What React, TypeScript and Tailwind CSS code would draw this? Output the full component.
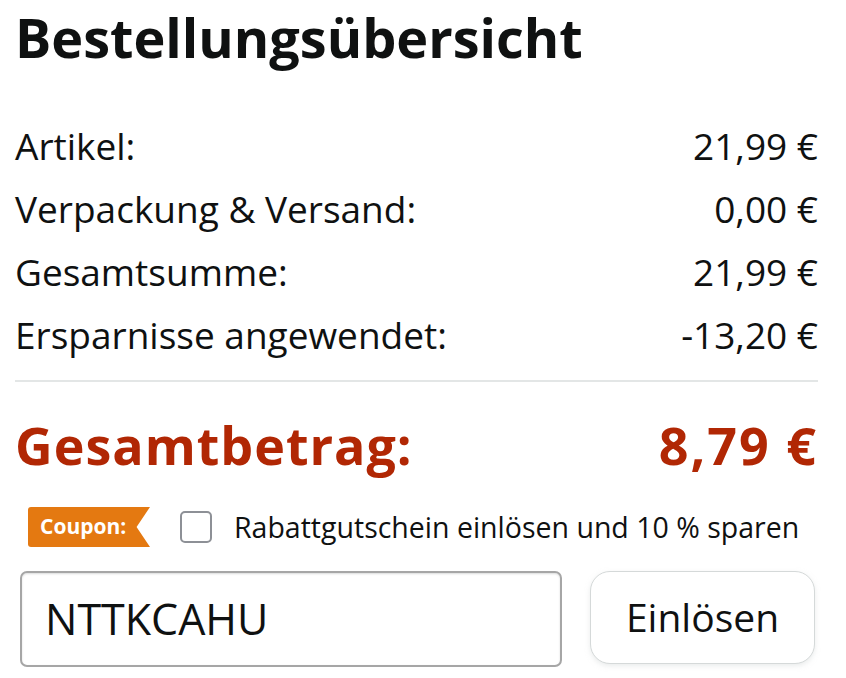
const rows = [
  { label: "Artikel:", value: "21,99 €" },
  { label: "Verpackung & Versand:", value: "0,00 €" },
  { label: "Gesamtsumme:", value: "21,99 €" },
  { label: "Ersparnisse angewendet:", value: "-13,20 €" },
];

export default function App() {
  return (
    <div className="min-h-[678px] bg-white font-['Open_Sans',sans-serif] text-[#0f1111]">
      <div className="w-[818px] pl-[15px]">
        <h1 className="text-[54px] font-bold leading-[74px]">
          Bestellungsübersicht
        </h1>

        <div className="mt-[40px]">
          {rows.map((row) => (
            <div
              key={row.label}
              className="flex h-[63px] items-center justify-between text-[37px]"
            >
              <span>{row.label}</span>
              <span>{row.value}</span>
            </div>
          ))}
        </div>

        <div className="mt-[14px] h-[2px] bg-[#e3e6e6]" />

        <div className="mt-[36px] flex h-[54px] items-center justify-between text-[52px] font-bold leading-[72px] tracking-[1px] text-[#b12704]">
          <span>Gesamtbetrag:</span>
          <span className="tracking-[2px]">8,79 €</span>
        </div>

        <div className="mt-[35px] flex h-[40px] items-center pl-[13px]">
          <div className="flex h-[40px] w-[122px] items-center rounded-l-[3px] bg-[#e47911] pl-[12px] text-[21px] font-bold text-white [clip-path:polygon(0_0,100%_0,89%_50%,100%_100%,0_100%)]">
            Coupon:
          </div>
          <div className="ml-[30px] h-[32px] w-[32px] rounded-[5px] border-2 border-[#8d9096] bg-white" />
          <span className="ml-[22px] text-[28.5px] leading-none">
            Rabattgutschein einlösen und 10 % sparen
          </span>
        </div>

        <div className="mt-[24px] flex items-start pl-[5px]">
          <div className="flex h-[96px] w-[542px] items-center rounded-[7px] border-2 border-[#a6a6a6] pl-[23px] text-[43px] text-[#0f1111] shadow-[inset_0_1px_2px_rgba(15,17,17,0.15)]">
            NTTKCAHU
          </div>
          <button className="ml-[28px] flex h-[93px] w-[225px] items-center justify-center rounded-[20px] border border-[#d5d9d9] bg-white text-[39px] text-[#0f1111] shadow-[0_2px_5px_rgba(213,217,217,0.5)]">
            Einlösen
          </button>
        </div>
      </div>
    </div>
  );
}
